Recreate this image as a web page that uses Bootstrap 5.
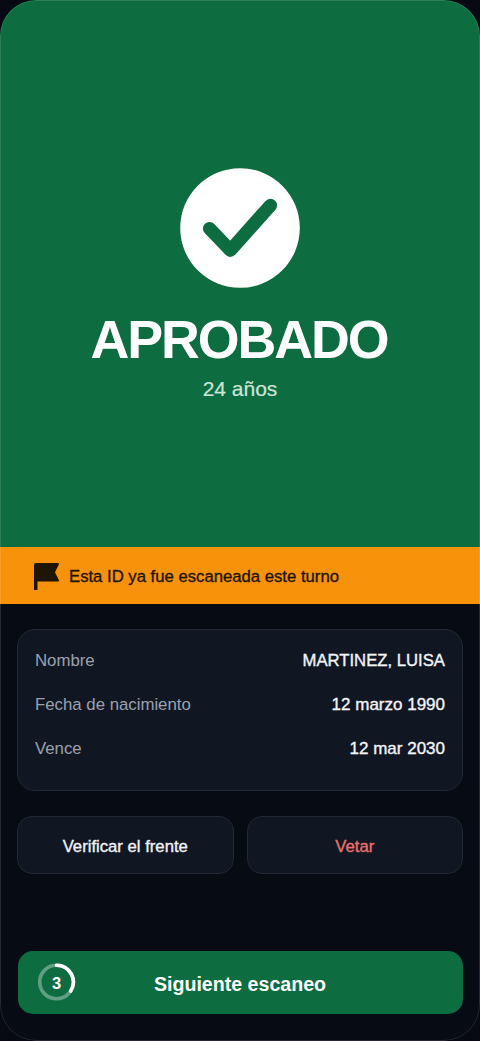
<!DOCTYPE html>
<html lang="es" data-bs-theme="dark">
<head>
<meta charset="utf-8">
<meta name="viewport" content="width=device-width, initial-scale=1">
<title>Aprobado</title>
<link href="https://cdn.jsdelivr.net/npm/bootstrap@5.3.0/dist/css/bootstrap.min.css" rel="stylesheet">
<style>
  html, body { height: 100%; }
  body { background: #070a12; font-family: "Liberation Sans", Arial, sans-serif; font-size: 16.8px; line-height: 24px; color: #f1f4fb; overflow: hidden; }
  .screen { height: 1041px; border-radius: 36px; background: #070b14; }
  .screen::after { content: ""; position: absolute; inset: 0; border: 1px solid rgba(255,255,255,.13); border-radius: 36px; pointer-events: none; }
  .hero { height: 547px; padding-top: 168px; background: #0d6c40; }
  .verdict { font-size: 53.8px; line-height: 60px; letter-spacing: -2.1px; margin: 21px 0 0; padding-right: 2px; color: #fff; }
  .age { font-size: 21px; line-height: 28px; margin-top: 6px; color: #cde5d8; -webkit-text-stroke: .2px currentColor; }
  .notice { height: 57px; padding: 1px 33px 0; background: #f8920b; color: #1f1503; }
  .medium { -webkit-text-stroke: .35px currentColor; }
  .notice .medium { font-size: 16.7px; margin-left: 9px; padding-top: 1px; }
  .panel { background: #111722; border: 1px solid #222834; }
  .details { margin: 25px 17px 0; height: 162px; border-radius: 18px; padding: 19px 17px 0; gap: 20px; }
  .details dt { color: #9ba1ad; font-weight: 400; }
  .details dd { margin: 0; font-size: 17px; font-weight: 400; }
  .details .holder { font-size: 16.7px; }
  .actions { margin: 25px 17px 0; gap: 13px; }
  .actions .btn { height: 58px; border-radius: 15px; font-size: 16.7px; color: #f1f4fb; padding: 4px 0 0; }
  .actions .btn.ban { color: #ee706d; }
  .next { height: 63px; margin: auto 17.5px 27px; border-radius: 15px; background: #0d6c40; color: #fff; font-size: 19.6px; font-weight: 700; padding: 4px 0 0; }
  .timer { left: 20px; top: 12px; }
</style>
</head>
<body>
<main class="screen position-relative overflow-hidden d-flex flex-column">
  <section class="hero d-flex flex-column align-items-center flex-shrink-0">
    <svg width="120" height="120" viewBox="0 0 120 120" aria-hidden="true">
      <circle cx="60" cy="60" r="59.800" fill="#fff"/>
      <path d="M29.500 60.500 50.300 82.300 90.500 37.300" fill="none" stroke="#0d6c40" stroke-width="13.200" stroke-linecap="round" stroke-linejoin="round"/>
    </svg>
    <h1 class="verdict fw-bold">APROBADO</h1>
    <div class="age">24 años</div>
  </section>
  <div class="notice d-flex align-items-center flex-shrink-0">
    <svg width="27" height="29" viewBox="0 0 27 29" aria-hidden="true">
      <path d="M1 28V3Q1 1 3 1H25Q26.600 1 25.800 2.500L22 10.300 25.800 18Q26.500 19.500 25 19.500H4.500V28Z" fill="#1f1503"/>
    </svg>
    <span class="medium">Esta ID ya fue escaneada este turno</span>
  </div>
  <dl class="details panel d-flex flex-column mb-0">
    <div class="d-flex justify-content-between"><dt>Nombre</dt><dd class="medium holder">MARTINEZ, LUISA</dd></div>
    <div class="d-flex justify-content-between"><dt>Fecha de nacimiento</dt><dd class="medium">12 marzo 1990</dd></div>
    <div class="d-flex justify-content-between"><dt>Vence</dt><dd class="medium">12 mar 2030</dd></div>
  </dl>
  <div class="actions d-flex">
    <button type="button" class="btn panel medium flex-fill w-50">Verificar el frente</button>
    <button type="button" class="btn panel medium ban flex-fill w-50">Vetar</button>
  </div>
  <button type="button" class="btn next border-0 position-relative">
    <svg class="timer position-absolute" width="38" height="38" viewBox="0 0 38 38" aria-hidden="true">
      <circle cx="18.500" cy="19" r="16.800" fill="none" stroke="#fff" stroke-opacity=".35" stroke-width="3.600"/>
      <path d="M18.500 2.200A16.800 16.800 0 0 1 32.700 28" fill="none" stroke="#fff" stroke-width="3.600" stroke-linecap="round"/>
      <text x="18.500" y="26" text-anchor="middle" fill="#fff" font-size="16.500" font-weight="700">3</text>
    </svg>
    Siguiente escaneo
  </button>
</main>
<script src="https://cdn.jsdelivr.net/npm/bootstrap@5.3.0/dist/js/bootstrap.bundle.min.js"></script>
</body>
</html>
